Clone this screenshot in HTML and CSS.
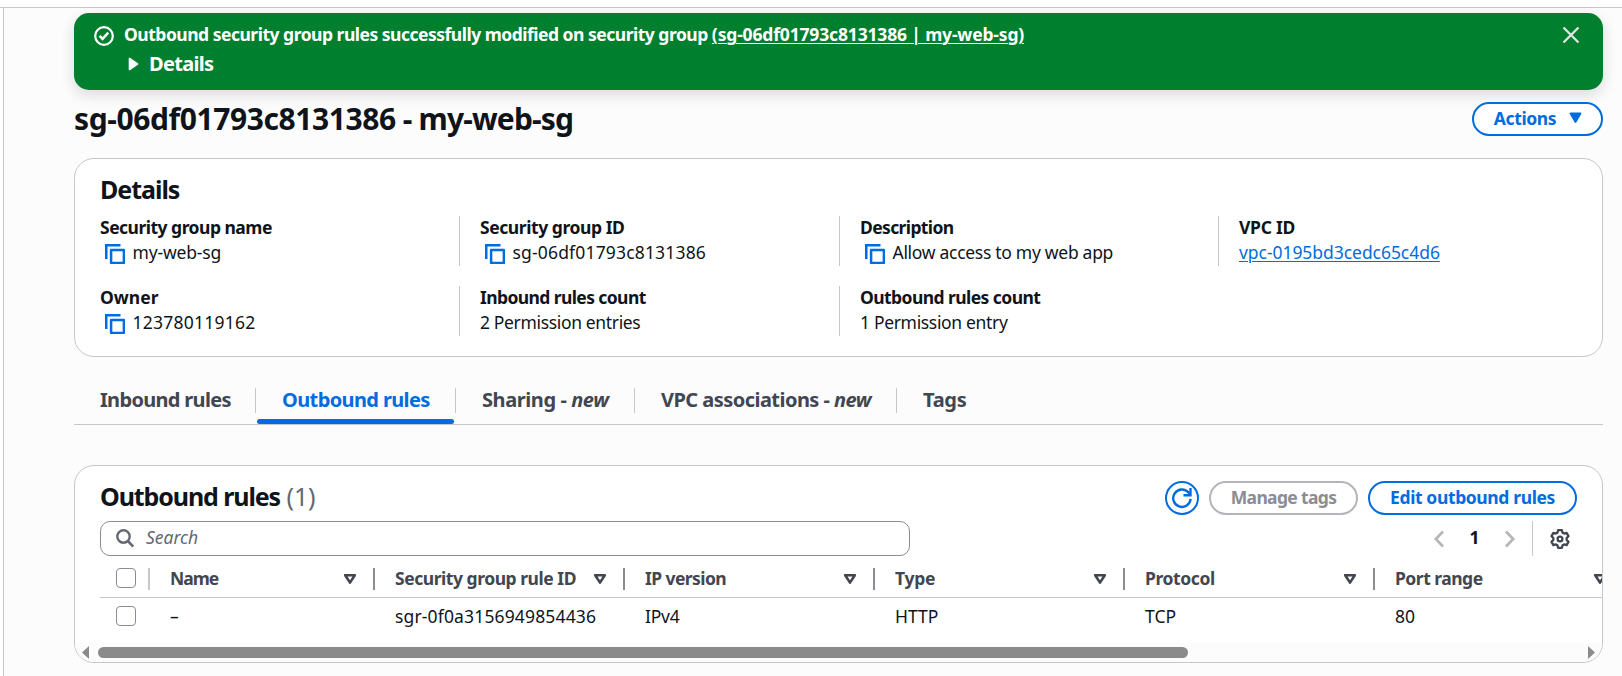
FILE: index.html
```html
<!DOCTYPE html>
<html lang="en">
<head>
<meta charset="utf-8">
<title>Security group</title>
<link rel="stylesheet" href="styles.css">
</head>
<body>
<svg width="0" height="0" class="defs">
  <symbol id="copy" viewBox="0 0 20 20"><path d="M1.25 15V1.25H15.5" fill="none" stroke="currentColor" stroke-width="2.5"/><rect x="6.1" y="6.1" width="12.8" height="12.8" fill="none" stroke="currentColor" stroke-width="2.5" stroke-linejoin="round"/></symbol>
  <symbol id="filter" viewBox="0 0 14 12"><path d="M2.2 2.2h9.6L7 9.6z" fill="none" stroke="currentColor" stroke-width="2.6" stroke-linejoin="round"/></symbol>
</svg>
<div class="app">
<main class="main">
  <section class="flash">
    <svg class="flash-icon" viewBox="0 0 20 20"><circle cx="10" cy="10" r="8.8" fill="none" stroke="#fff" stroke-width="2.2"/><path d="M5.6 9.900l3 3L14.200 6.700" fill="none" stroke="#fff" stroke-width="2.5"/></svg>
    <div class="flash-body">
      <div class="flash-msg"><span class="msg-a">Outbound security group rules successfully modified on security group </span><a class="msg-b">(sg-06df01793c8131386 | my-web-sg)</a></div>
      <div class="flash-more"><svg width="11" height="14" viewBox="0 0 11 14"><path d="M1.5 1.5L9.5 7l-8 5.500z" fill="#fff" stroke="#fff" stroke-width="1.600" stroke-linejoin="round"/></svg><span>Details</span></div>
    </div>
    <svg class="close" viewBox="0 0 18 18"><path d="M1.500 1.500l15 15M16.500 1.500l-15 15" stroke="#dfe5e0" stroke-width="2.300"/></svg>
  </section>

  <header class="title-row">
    <h1><span class="title-id">sg-06df01793c8131386</span> - my-web-sg</h1>
    <button class="btn actions"><span>Actions</span><svg width="13" height="12" viewBox="0 0 13 12"><path d="M1.500 1.500h10L6.500 10z" fill="currentColor" stroke="currentColor" stroke-width="1.800" stroke-linejoin="round"/></svg></button>
  </header>

  <section class="card details">
    <h2><span class="h-det">Details</span></h2>
    <div class="grid">
      <div class="field"><b class="l1">Security group name</b><p><svg class="copy"><use href="#copy"/></svg><span class="v1">my-web-sg</span></p></div>
      <div class="field"><b class="l2">Security group ID</b><p><svg class="copy"><use href="#copy"/></svg><span class="v2">sg-06df01793c8131386</span></p></div>
      <div class="field"><b class="l3">Description</b><p><svg class="copy"><use href="#copy"/></svg><span class="v3">Allow access to my web app</span></p></div>
      <div class="field"><b class="l4">VPC ID</b><p><a class="v4">vpc-0195bd3cedc65c4d6</a></p></div>
      <div class="field"><b class="l5">Owner</b><p><svg class="copy"><use href="#copy"/></svg><span class="v5">123780119162</span></p></div>
      <div class="field"><b class="l6">Inbound rules count</b><p><span class="v6">2 Permission entries</span></p></div>
      <div class="field"><b class="l7">Outbound rules count</b><p><span class="v7">1 Permission entry</span></p></div>
    </div>
  </section>

  <nav class="tabs">
    <div class="tab t1"><span>Inbound rules</span></div>
    <div class="tab t2 active"><span>Outbound rules</span></div>
    <div class="tab t3"><span>Sharing - <i>new</i></span></div>
    <div class="tab t4"><span>VPC associations - <i>new</i></span></div>
    <div class="tab t5"><span>Tags</span></div>
  </nav>

  <section class="card rules">
    <div class="rules-head">
      <h2><span class="h-rules">Outbound rules</span> <span class="count">(1)</span></h2>
      <div class="buttons">
        <button class="btn round"><svg width="22" height="22" viewBox="0 0 22 22"><path d="M19.600 11.800A8.700 8.700 0 1 1 17.600 5.600L19 7.600" fill="none" stroke="currentColor" stroke-width="2.400"/><path d="M19.500 1v7.200H12.500" fill="none" stroke="currentColor" stroke-width="2.400"/></svg></button>
        <button class="btn disabled"><span>Manage tags</span></button>
        <button class="btn edit"><span>Edit outbound rules</span></button>
      </div>
    </div>
    <div class="tools">
      <div class="search"><svg width="18" height="19" viewBox="0 0 18 19"><circle cx="7.500" cy="7.500" r="6.200" fill="none" stroke="currentColor" stroke-width="2.400"/><path d="M12 12.200l5.200 5.300" stroke="currentColor" stroke-width="2.600"/></svg><span>Search</span></div>
      <div class="pager">
        <svg width="10" height="18" viewBox="0 0 10 18"><path d="M9 1.500L1.800 9 9 16.500" fill="none" stroke="#b4b4bb" stroke-width="2.600"/></svg>
        <b>1</b>
        <svg width="10" height="18" viewBox="0 0 10 18"><path d="M1 1.500L8.200 9 1 16.500" fill="none" stroke="#b4b4bb" stroke-width="2.600"/></svg>
        <i class="bar"></i>
        <svg class="gear" viewBox="0 0 20 20"><path d="M8.100 1.200h3.800l.7 2.500 1.500.9 2.500-.7 1.900 3.200-1.800 1.900v2l1.800 1.900-1.900 3.200-2.500-.7-1.500.9-.7 2.500H8.100l-.7-2.500-1.500-.9-2.500.7-1.900-3.200L3.300 11V9L1.500 7.100l1.900-3.200 2.500.7 1.500-.9z" fill="none" stroke="currentColor" stroke-width="2.300" stroke-linejoin="round"/><circle cx="10" cy="10" r="2.400" fill="none" stroke="currentColor" stroke-width="2.300"/></svg>
      </div>
    </div>
    <div class="table">
      <div class="tr th">
        <div class="check"><i class="box"></i></div>
        <div class="cell"><span class="c1">Name</span><svg><use href="#filter"/></svg></div>
        <div class="cell"><span class="c2">Security group rule ID</span><svg><use href="#filter"/></svg></div>
        <div class="cell"><span class="c3">IP version</span><svg><use href="#filter"/></svg></div>
        <div class="cell"><span class="c4">Type</span><svg><use href="#filter"/></svg></div>
        <div class="cell"><span class="c5">Protocol</span><svg><use href="#filter"/></svg></div>
        <div class="cell"><span class="c6">Port range</span><svg><use href="#filter"/></svg></div>
      </div>
      <div class="tr td">
        <div class="check"><i class="box"></i></div>
        <div class="cell"><span class="d1">–</span></div>
        <div class="cell"><span class="d2">sgr-0f0a3156949854436</span></div>
        <div class="cell"><span class="d3">IPv4</span></div>
        <div class="cell"><span class="d4">HTTP</span></div>
        <div class="cell"><span class="d5">TCP</span></div>
        <div class="cell"><span class="d6">80</span></div>
      </div>
    </div>
    <div class="scrollbar"><svg width="7" height="13"><path d="M7 0v13L0 6.500z" fill="#8b8b8b"/></svg><i class="thumb"></i><svg class="right" width="7" height="13"><path d="M0 0v13l7-6.500z" fill="#8b8b8b"/></svg></div>
  </section>
</main>
</div>
</body>
</html>
```
FILE: styles.css
```css
* { box-sizing: border-box; margin: 0; padding: 0; }
body { background: #fff; color: #0f141a; font: 17.5px/25px "Noto Sans", sans-serif; font-stretch: 90%; overflow: hidden; height: 676px; white-space: nowrap; }
b, h1, h2, button { font-weight: 700; }
.defs { position: absolute; }
.app { margin-top: 7px; border-top: 1px solid #c6c6cd; padding-left: 3px; height: 669px; }
.main { border-left: 1px solid #c6c6cd; background: #fcfcfd; height: 100%; padding: 5px 19px 0 70px; display: flex; flex-direction: column; }

.flash { flex: none; height: 77px; border-radius: 15px; background: #00802f; color: #fff; font-weight: 700; display: flex; align-items: flex-start; padding: 0 23px 0 20px; box-shadow: 0 5px 14px 1px rgba(0,7,22,.12); }
.flash-icon { width: 20px; height: 20px; margin: 13px 10px 0 0; }
.flash-body { flex: 1; padding-top: 9px; }
.msg-a { letter-spacing: -.495px; }
.msg-b { letter-spacing: -.16px; text-decoration: underline; text-underline-offset: 2px; text-decoration-thickness: 1px; }
.flash-more { display: flex; align-items: center; gap: 10px; padding: 4px 0 0 4px; font-size: 20px; letter-spacing: -.7px; }
.close { width: 18px; height: 18px; margin-top: 13px; }

.title-row { display: flex; justify-content: space-between; align-items: flex-start; height: 68px; padding-top: 12px; }
h1 { font-size: 30px; line-height: 34px; letter-spacing: -.82px; }
.title-id { letter-spacing: -.41px; }
.btn { font-family: inherit; font-size: 17.5px; font-stretch: inherit; line-height: 28px; height: 34px; padding-bottom: 2px; border: 2px solid #006ce0; border-radius: 17px; background: #fff; color: #006ce0; display: flex; align-items: center; justify-content: center; white-space: nowrap; }
.actions { width: 131px; gap: 13px; padding-left: 1px; letter-spacing: -.4px; }

.card { background: #fff; border: 1px solid #c6c6cd; border-radius: 20px; flex: none; }
h2 { font-size: 25px; line-height: 30px; }
.h-det { letter-spacing: -1.02px; }
.details { height: 199px; padding: 15px 0 0 25px; }
.grid { display: grid; grid-template-columns: 359px 380px 379px 360px; grid-auto-rows: 50px; row-gap: 20px; margin-top: 12px; }
.field { padding-left: 20px; border-left: 1px solid #c6c6cd; }
.field:nth-child(4n+1) { padding-left: 0; border-left: 0; }
.field b { display: block; margin-top: -1px; }
.field p { display: flex; }
.copy { width: 20px; height: 20px; color: #006ce0; margin: 4px 7.5px 0 5px; }
.l1 { letter-spacing: -.51px; } .l2 { letter-spacing: -.43px; } .l3 { letter-spacing: -.62px; } .l4 { letter-spacing: -.25px; }
.l6 { letter-spacing: -.6px; } .l7 { letter-spacing: -.57px; }
.v1 { letter-spacing: -.17px; } .v2 { letter-spacing: .17px; } .v3 { letter-spacing: -.29px; }
.v5 { letter-spacing: .25px; } .v6 { letter-spacing: -.35px; } .v7 { letter-spacing: -.33px; }
.v4 { letter-spacing: -.05px; color: #006ce0; text-decoration: underline; text-underline-offset: 2px; text-decoration-thickness: 1px; }

.tabs { display: flex; margin-top: 30px; height: 38px; border-bottom: 1px solid #c6c6cd; font-size: 20px; font-weight: 700; color: #424650; }
.tab { position: relative; height: 25px; margin-top: 1px; padding-left: 26px; border-right: 1px solid #c6c6cd; line-height: 24px; }
.t1 { width: 182px; letter-spacing: -.68px; } .t2 { width: 200px; letter-spacing: -.62px; } .t3 { width: 179px; letter-spacing: -.42px; } .t4 { width: 262px; letter-spacing: -.54px; } .t5 { border: 0; letter-spacing: -.3px; }
.active { color: #006ce0; }
.active::after { content: ""; position: absolute; left: 1px; right: 1px; top: 31px; height: 5px; border-radius: 3px; background: #006ce0; }

.rules { margin-top: 40px; height: 198px; overflow: hidden; }
.rules-head { display: flex; justify-content: space-between; padding: 15px 25px 0 25px; }
.h-rules { letter-spacing: -1.1px; }
.count { font-weight: 400; color: #656871; letter-spacing: -.2px; }
.buttons { display: flex; gap: 10px; }
.round { width: 34px; padding-bottom: 0; }
.disabled { width: 149px; border-color: #b4b4bb; color: #8c8c94; letter-spacing: -.66px; }
.edit { width: 209px; letter-spacing: -.38px; }
.tools { display: flex; justify-content: space-between; padding: 6px 32px 0 25px; height: 48px; }
.search { width: 810px; height: 35px; border: 1px solid #8c8c94; border-radius: 10px; display: flex; align-items: center; padding-left: 15px; gap: 12px; font-style: italic; color: #656871; }
.search span { margin-top: -2px; }
.pager { display: flex; align-items: center; height: 35px; }
.pager b { width: 61px; text-align: center; margin-top: -2px; }
.bar { width: 1px; height: 35px; background: #c6c6cd; margin: 0 17px 0 17px; }
.gear { width: 20px; height: 20px; color: #424650; }
.table { margin-left: 25px; }
.tr { display: grid; grid-template-columns: 50px 225px repeat(5, 250px); }
.th { height: 35px; border-bottom: 1px solid #c6c6cd; color: #424650; font-weight: 700; padding-top: 5px; }
.th > div { height: 22px; border-right: 2px solid #8c8c94; }
.th > .check { border-color: #c6c6cd; }
.check { padding-left: 16px; }
.box { display: block; width: 20px; height: 20px; border: 1.500px solid #8c8c94; border-radius: 4px; }
.cell { display: flex; align-items: center; justify-content: space-between; padding: 0 16px 0 20px; }
.cell svg { width: 14px; height: 12px; }
.th .cell span { margin-top: -1px; }
.c1 { letter-spacing: -1px; } .c2 { letter-spacing: -.46px; } .c3 { letter-spacing: -.57px; } .c4 { letter-spacing: -.25px; } .c5 { letter-spacing: -.39px; } .c6 { letter-spacing: -.5px; }
.d2 { letter-spacing: .15px; } .d3 { letter-spacing: -.2px; }
.td { padding-top: 8px; height: 45px; }
.td .cell { height: 20px; }
.scrollbar { display: flex; height: 19px; background: #fcfcfd; align-items: center; padding: 0 7px; }
.thumb { width: 1090px; height: 11px; border-radius: 6px; background: #8b8b8b; margin-left: 9px; }
.right { margin-left: auto; }
```
